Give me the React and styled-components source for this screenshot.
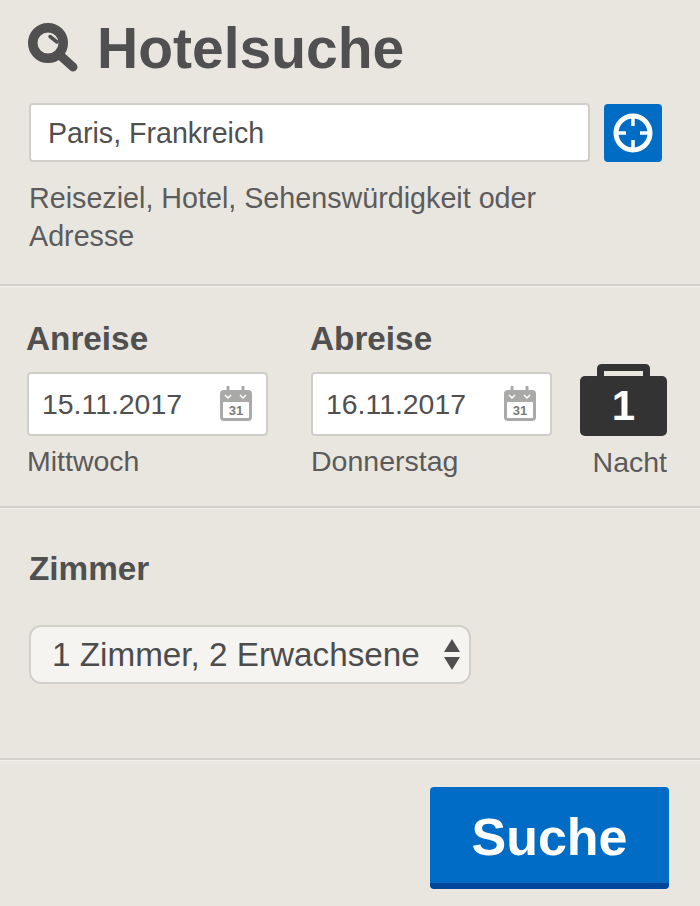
import React from 'react';
import styled, { createGlobalStyle } from 'styled-components';

const Global = createGlobalStyle`
  html, body { margin: 0; padding: 0; background: #e9e6e0; }
  body { font-family: "Liberation Sans", Arial, sans-serif; color: #505050; }
  * { box-sizing: border-box; }
`;
const Page = styled.div`
  width: 700px; height: 906px; overflow: hidden; background: #e9e6e0;
  display: flex; flex-direction: column;
`;
const Section = styled.section`
  height: ${p => p.$h}px;
  padding: ${p => p.$pad};
  border-bottom: ${p => p.$line ? '2px solid #d2d0cb' : 'none'};
  box-shadow: ${p => p.$line ? '0 1px 0 #f2f0ec' : 'none'};
  flex: none;
`;
const TitleRow = styled.div`
  display: flex; align-items: center; gap: 18px; height: 60px; margin-bottom: 25px; padding-left: 27px;
`;
const Title = styled.h1`
  margin: 0; font-size: 57px; line-height: 60px; font-weight: 700; color: #505050;
`;
const LocationBlock = styled.div`
  padding-left: 29px;
`;
const LocationRow = styled.div`
  display: flex; align-items: center; gap: 14px;
`;
const Input = styled.div`
  background: #fff; border: 2px solid #d0cec9; border-radius: 4px;
  width: ${p => p.$w}px; height: ${p => p.$h}px;
  margin-top: ${p => p.$mt || 0}px; margin-left: ${p => p.$ml || 0}px;
  display: flex; align-items: center; justify-content: space-between;
  padding: ${p => p.$pad}; font-size: ${p => p.$fs}px; color: #505050;
`;
const LocateButton = styled.button`
  width: 58px; height: 58px; border: 0; border-radius: 4px; background: #006cc4; padding: 0;
  display: flex; align-items: center; justify-content: center;
`;
const Hint = styled.p`
  margin: 17px 0 0; font-size: 28.7px; line-height: 38px; color: #5c5c5c; width: 560px;
`;
const Dates = styled.div`
  display: flex; align-items: flex-start;
`;
const DateCol = styled.div`
  width: ${p => p.$w}px; display: flex; flex-direction: column;
`;
const Label = styled.div`
  font-size: 33.3px; line-height: 36px; font-weight: 700; color: #505050;
`;
const Sub = styled.div`
  font-size: 28.5px; line-height: 32px; color: #5a5a5a; margin: 9px 0 0 1px;
`;
const NightCol = styled.div`
  width: 87px; margin-left: -14px; margin-top: 43px;
  display: flex; flex-direction: column; align-items: flex-end;
`;
const NightLabel = styled.div`
  font-size: 28.5px; line-height: 32px; color: #5a5a5a; margin-top: 10px; white-space: nowrap;
`;
const Case = styled.div`
  position: relative; width: 87px; height: 72px;
`;
const CaseNum = styled.span`
  position: absolute; left: 0; right: 0; top: 18px; text-align: center;
  color: #fff; font-size: 42px; line-height: 48px; font-weight: 700;
`;
const RoomLabel = styled(Label)`
  margin-bottom: 38px; padding-left: 2px;
`;
const Select = styled.div`
  width: 442px; height: 59px; margin-left: 2px; background: #f5f4f1;
  border: 2px solid #d2d0cb; border-radius: 12px;
  display: flex; align-items: center; justify-content: space-between;
  padding: 0 9px 0 21px; font-size: 33.25px; color: #4c4c4c;
`;
const Footer = styled.div`
  display: flex; justify-content: flex-end; padding: 27px 31px 0 0;
`;
const SearchButton = styled.button`
  width: 239px; height: 102px; border: 0; border-bottom: 6px solid #00479c; border-radius: 4px;
  background: #006cc6; color: #fff; font-family: inherit; font-size: 52px; font-weight: 700; padding: 4px 0 0;
`;

const SearchIcon = () => (
  <svg width="52" height="52" viewBox="0 0 52 52" style={{ flex: 'none' }}>
    <circle cx="21" cy="21" r="15.25" fill="none" stroke="#505050" strokeWidth="9.5" />
    <path d="M35 35L46 45" stroke="#505050" strokeWidth="9" strokeLinecap="round" />
    <path d="M23 14.5L30 20" fill="none" stroke="#505050" strokeWidth="3.5" strokeLinecap="round" />
  </svg>
);
const Target = () => (
  <svg width="42" height="42" viewBox="0 0 42 42">
    <circle cx="21" cy="21" r="17" fill="none" stroke="#fff" strokeWidth="5" />
    <path d="M21 5V14M21 28V37M5 21H14M28 21H37" stroke="#fff" strokeWidth="3.5" />
  </svg>
);
const Calendar = () => (
  <svg width="34" height="36" viewBox="0 0 34 36">
    <rect x="1" y="4" width="32" height="31" rx="4" fill="#a9a9a7" />
    <path d="M9 1V9M24 1V9" stroke="#a9a9a7" strokeWidth="3" strokeLinecap="round" />
    <path d="M6 9L9 12L12 9M21 9L24 12L27 9" fill="none" stroke="#fff" strokeWidth="1.5" />
    <rect x="4" y="16" width="26" height="16" rx="1" fill="#fff" />
    <text x="17" y="29" textAnchor="middle" fontSize="13" fontWeight="700" fontFamily="Liberation Sans" fill="#7a7a7a">31</text>
  </svg>
);
const Briefcase = () => (
  <svg width="87" height="72" viewBox="0 0 87 72" style={{ position: 'absolute', inset: 0 }}>
    <path d="M17 14V5Q17 0 22 0H65Q70 0 70 5V14H63V7H24V14Z" fill="#333" />
    <rect x="0" y="12" width="87" height="60" rx="5" fill="#333" />
  </svg>
);
const Updown = () => (
  <svg width="16" height="31" viewBox="0 0 16 31">
    <path d="M8 0L16 13H0Z M0 18H16L8 31Z" fill="#4f4f4f" />
  </svg>
);

export default function App() {
  return (
    <Page>
      <Global />
      <Section $h={286} $pad="18px 0 0 0" $line>
        <TitleRow>
          <SearchIcon />
          <Title>Hotelsuche</Title>
        </TitleRow>
        <LocationBlock>
          <LocationRow>
            <Input $w={561} $h={59} $pad="2px 17px 0" $fs={28.6}>Paris, Frankreich</Input>
            <LocateButton aria-label="Standort"><Target /></LocateButton>
          </LocationRow>
          <Hint>Reiseziel, Hotel, Sehenswürdigkeit oder Adresse</Hint>
        </LocationBlock>
      </Section>
      <Section $h={222} $pad="35px 0 0 26px" $line>
        <Dates>
          <DateCol $w={284}>
            <Label>Anreise</Label>
            <Input $w={241} $h={64} $mt={15} $ml={1} $pad="0 13px 0 13px" $fs={28.4}>15.11.2017<Calendar /></Input>
            <Sub>Mittwoch</Sub>
          </DateCol>
          <DateCol $w={284}>
            <Label>Abreise</Label>
            <Input $w={241} $h={64} $mt={15} $ml={1} $pad="0 13px 0 13px" $fs={28.4}>16.11.2017<Calendar /></Input>
            <Sub>Donnerstag</Sub>
          </DateCol>
          <NightCol>
            <Case><Briefcase /><CaseNum>1</CaseNum></Case>
            <NightLabel>Nacht</NightLabel>
          </NightCol>
        </Dates>
      </Section>
      <Section $h={252} $pad="43px 0 0 27px" $line>
        <RoomLabel>Zimmer</RoomLabel>
        <Select>1 Zimmer, 2 Erwachsene<Updown /></Select>
      </Section>
      <Footer><SearchButton>Suche</SearchButton></Footer>
    </Page>
  );
}
